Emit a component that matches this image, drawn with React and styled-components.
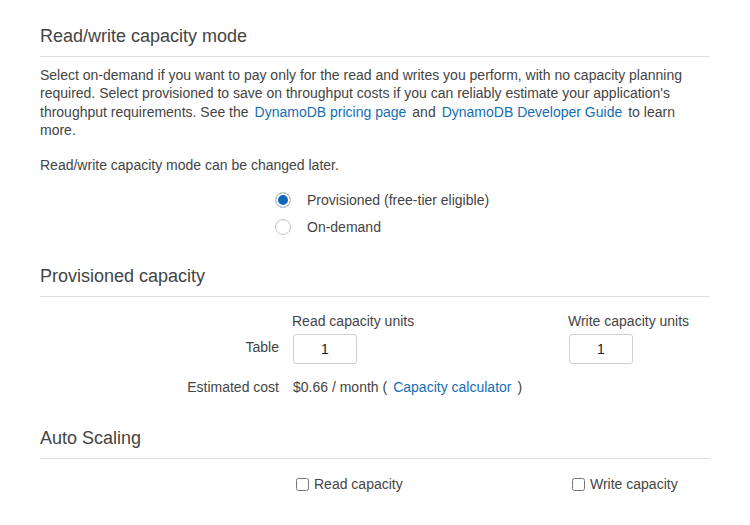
import React, { useState } from "react";
import styled, { createGlobalStyle } from "styled-components";

const GlobalStyle = createGlobalStyle`
  body {
    margin: 0;
    background: #fff;
    font-family: "Liberation Sans", Arial, sans-serif;
    color: #444;
  }
`;

export default function App() {
  const [mode, setMode] = useState("provisioned");
  const [readUnits, setReadUnits] = useState("1");
  const [writeUnits, setWriteUnits] = useState("1");

  return (
    <>
      <GlobalStyle />
      <Page>
        <Section>
          <Heading>Read/write capacity mode</Heading>
          <Paragraph>
            Select on-demand if you want to pay only for the read and writes you perform, with no capacity
            planning required. Select provisioned to save on throughput costs if you can reliably estimate
            your application's throughput requirements. See the
            <Link href="#">DynamoDB pricing page</Link>and
            <Link href="#">DynamoDB Developer Guide</Link>to learn more.
          </Paragraph>
          <Note>Read/write capacity mode can be changed later.</Note>
          <RadioGroup>
            <RadioRow>
              <Radio
                type="radio"
                name="mode"
                checked={mode === "provisioned"}
                onChange={() => setMode("provisioned")}
              />
              Provisioned (free-tier eligible)
            </RadioRow>
            <RadioRow>
              <Radio
                type="radio"
                name="mode"
                checked={mode === "ondemand"}
                onChange={() => setMode("ondemand")}
              />
              On-demand
            </RadioRow>
          </RadioGroup>
        </Section>

        <Section $bottom={32}>
          <Heading>Provisioned capacity</Heading>
          <CapacityGrid>
            <span />
            <ColumnLabel>Read capacity units</ColumnLabel>
            <ColumnLabel>Write capacity units</ColumnLabel>

            <RowLabel>Table</RowLabel>
            <UnitsInput value={readUnits} onChange={(e) => setReadUnits(e.target.value)} />
            <UnitsInput value={writeUnits} onChange={(e) => setWriteUnits(e.target.value)} />

            <CostLabel>Estimated cost</CostLabel>
            <Cost>
              $0.66 / month <Paren>(</Paren>
              <Link href="#">Capacity calculator</Link>
              <Paren>)</Paren>
            </Cost>
          </CapacityGrid>
        </Section>

        <Section>
          <Heading>Auto Scaling</Heading>
          <ScalingRow>
            <CheckLabel>
              <Checkbox type="checkbox" />
              Read capacity
            </CheckLabel>
            <CheckLabel>
              <Checkbox type="checkbox" />
              Write capacity
            </CheckLabel>
          </ScalingRow>
        </Section>
      </Page>
    </>
  );
}

const Page = styled.div`
  width: 670px;
  padding: 25px 40px 0 40px;
  font-size: 14px;
`;

const Section = styled.section`
  margin-bottom: ${(p) => p.$bottom || 25}px;
`;

const Heading = styled.h2`
  margin: 0;
  padding-bottom: 9px;
  border-bottom: 1px solid #dedede;
  font-size: 18px;
  font-weight: normal;
  line-height: 22px;
  color: #444;
`;

const Paragraph = styled.p`
  margin: 9px 0 0 0;
  line-height: 18.3px;
`;

const Link = styled.a`
  color: #146eb4;
  text-decoration: none;
  margin: 0 6px;
`;

const Note = styled.p`
  margin: 17px 0 0 0;
  line-height: 18px;
`;

const RadioGroup = styled.div`
  display: flex;
  flex-direction: column;
  margin: 12px 0 0 235px;
`;

const RadioRow = styled.label`
  display: flex;
  align-items: center;
  gap: 16px;
  height: 27px;
`;

const Radio = styled.input`
  appearance: none;
  margin: 0;
  width: 16px;
  height: 16px;
  border: 1px solid #c6c6c6;
  border-radius: 50%;
  background: #fff;

  &:checked {
    background: #1166bb;
    box-shadow: inset 0 0 0 2px #fff;
  }
`;

const CapacityGrid = styled.div`
  display: grid;
  grid-template-columns: 239px 262px 1fr;
  column-gap: 14px;
  align-items: center;
  margin-top: 15px;
`;

const ColumnLabel = styled.div`
  line-height: 18px;
  margin-bottom: 4px;
  margin-left: -1px;
`;

const RowLabel = styled.div`
  text-align: right;
  align-self: center;
  padding-bottom: 4px;
`;

const CostLabel = styled(RowLabel)`
  margin-top: 15px;
  padding-bottom: 0;
`;

const UnitsInput = styled.input`
  box-sizing: border-box;
  width: 64px;
  height: 30px;
  border: 1px solid #cfcfcf;
  border-radius: 3px;
  font-family: "Liberation Sans", Arial, sans-serif;
  font-size: 14px;
  color: #222;
  text-align: center;
  outline: none;
`;

const Cost = styled.div`
  grid-column: 2 / 4;
  margin-top: 15px;
`;

const Paren = styled.span`
  color: #444;
`;

const ScalingRow = styled.div`
  display: grid;
  grid-template-columns: 276px 1fr;
  margin: 16px 0 0 252px;
`;

const CheckLabel = styled.label`
  display: flex;
  align-items: center;
  gap: 5px;
  line-height: 18px;
`;

const Checkbox = styled.input`
  width: 13px;
  height: 13px;
  margin: 0 0 0 4px;
`;
